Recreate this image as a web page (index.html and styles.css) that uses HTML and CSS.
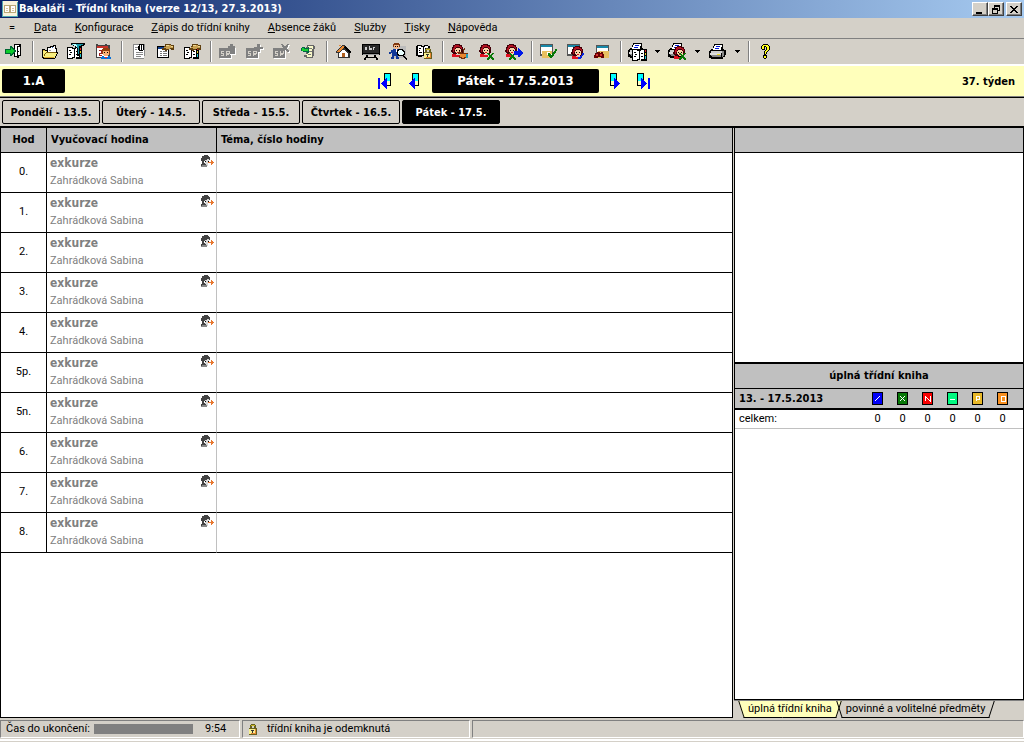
FILE: index.html
```html
<!DOCTYPE html>
<html lang="cs">
<head>
<meta charset="utf-8">
<title>Bakaláři - Třídní kniha</title>
<link rel="stylesheet" href="styles.css">
</head>
<body>
<svg class="defs" aria-hidden="true">
  <symbol id="girl" viewBox="0 0 14 14">
    <path fill="#400008" d="M4 0h5v1h2v2h1v6h-1v1H2V9H1V8H0V6h1V3h1V1h2z"/>
    <path fill="#b01020" d="M4 1h4v1h2v1h1v2h-1V4H9V3H5v1H4v2H3v2H2V4h1V2h1z"/>
    <path fill="#f8d0a8" d="M5 4h4v1h1v4H9v1H6V9H5V8H4V5h1z"/>
    <path fill="#000" d="M5 6h1v1H5zM8 6h1v1H8z"/>
    <path fill="#e01020" d="M6 8h2v1H6zM1 10h4v1h4v2H1z"/>
  </symbol>
  <symbol id="absent" viewBox="0 0 14 13">
    <path fill="#444" d="M4 0h4v1h1v1h1v3H9V4H7v1H5v1H4v2h1v1h1v2H1V9h1V6H1V3h1V1h2z"/>
    <path fill="#d8d8d8" d="M5 5h2V4h2v4H8v1H5zM6 9h2v2H6z"/>
    <path fill="#888" d="M2 10h5v2H1v-1h1z"/>
    <path fill="#000" d="M5 6h1v1H5zM8 6h1v1H8z"/>
    <path fill="#e87830" d="M8 7h3V5h1v1h1v1h1v1h-1v1h-1v1h-1V8H8z"/>
  </symbol>
  <symbol id="book" viewBox="0 0 15 13">
    <path fill="#000" d="M0 1h6v1h2V1h7v12H9v-1H6v1H0z"/>
    <path fill="#fff" d="M1 2h4v1h2v8H5v1H1zM8 3h1V2h3v9H9v1H8z"/>
    <path fill="#000" d="M2 4h2v1H2zM3 6h2v1H3zM2 8h2v1H2zM9 5h2v1H9zM9 8h2v1H9z"/>
    <path fill="#e02020" d="M13 2h1v2h-1z"/><path fill="#e8d020" d="M13 5h1v2h-1z"/><path fill="#20c8d0" d="M13 8h1v3h-1z"/>
  </symbol>
  <symbol id="hand" viewBox="0 0 12 7">
    <path fill="#604010" d="M3 0h6v1h3v5H9V5H7v1H5v1H3V6H0V4h2V2h1z"/>
    <path fill="#c8a050" d="M4 1h5v1h2v2H8v1H4V4H2V3h2z"/>
    <path fill="#f0d890" d="M4 1h3v1H4zM9 2h2v1H9z"/>
  </symbol>
  <symbol id="card" viewBox="0 0 14 13">
    <path fill="#555" d="M0 0h13v11h-1v1H0z"/><path fill="#fff" d="M1 1h11v9H1z"/>
    <path fill="#1888a8" d="M1 1h11v2H1z"/>
  </symbol>
  <symbol id="sheet" viewBox="0 0 13 12">
    <path fill="#000" d="M0 0h12v12H0z"/><path fill="#fff" d="M1 3h10v8H1z"/><path fill="#104090" d="M1 1h10v2H1z"/>
    <path fill="#777" d="M3 5h2v1H3zM6 5h4v1H6zM3 7h2v1H3zM6 7h4v1H6zM3 9h2v1H3zM6 9h4v1H6z"/>
  </symbol>
  <symbol id="gray" viewBox="0 0 18 16">
    <path fill="#fff" d="M1 6h12v10H1z"/><path fill="#808080" d="M0 5h12v10H0z"/>
    <path fill="#d4d0c8" d="M2 8h3v1H3v1h2v3H2v-1h2v-1H2zM7 8h4v3h-1v1H8v1H7z"/>
    <path fill="#808080" d="M8 9h2v1H8z"/>
  </symbol>
  <symbol id="printer" viewBox="0 0 17 15">
    <path fill="#000" d="M5 0h9v5h1v1h2v5h-1v2h-2v2H2v-1H0V7h1V6h1V5h2V2h1z"/>
    <path fill="#fff" d="M6 1h7v2h-1v3H4V4h1V2h1z"/><path fill="#0018d8" d="M7 2h4v1H7zM6 4h4v1H6z"/>
    <path fill="#ccc" d="M2 7h11v2H2z"/><path fill="#888" d="M13 7h2v5h-1v1h-1zM2 11h10v2H3z"/>
    <path fill="#ddd" d="M1 9h11v2H1z"/><path fill="#f0e020" d="M8 10h3v1H8z"/>
  </symbol>
  <symbol id="lock" viewBox="0 0 10 11">
    <path fill="#666020" d="M3 0h4v1h1v3h1v7H1V4h1V1h1z"/><path fill="#d4d0c8" d="M4 2h2v2H4z"/>
    <path fill="#c8b828" d="M3 1h4v1H3z"/><path fill="#f8f090" d="M1 5h7v5H1z"/><path fill="#e88830" d="M7 5h1v5H7zM3 9h5v1H3z"/>
    <path fill="#333" d="M3 6h3v1H5v2H4V7H3z"/>
  </symbol>
  <symbol id="cross" viewBox="0 0 7 7"><path fill="#087808" d="M0 0h2v1h1v1h1V1h1V0h2v1H6v1H5v2h1v1h1v2H5V6H4V5H3v1H2v1H0V5h1V4h1V2H1V1H0z"/></symbol>
  <symbol id="drop" viewBox="0 0 5 3"><path d="M0 0h5v1H4v1H3v1H2V2H1V1H0z"/></symbol>
</svg>

<header class="titlebar">
  <svg class="appicon" viewBox="0 0 16 16"><path fill="#f8f4dc" d="M0 0h16v16H0z"/><path fill="#50a8b0" d="M0 0h1v16H0zM15 1h1v15h-1zM0 15h16v1H0z"/><path fill="#b8a878" d="M2 4h12v8H2z"/><path fill="#fff" d="M3 5h4v6H3zM9 5h4v6H9z"/><path fill="#d8c8a0" d="M4 7h2v1H4zM4 9h2v1H4zM10 7h2v1h-2zM10 9h2v1h-2z"/></svg>
  <h1>Bakaláři - Třídní kniha (verze 12/13, 27.3.2013)</h1>
  <div class="winbuttons">
    <button aria-label="Minimalizovat"><svg viewBox="0 0 10 9"><path d="M1 7h6v2H1z"/></svg></button>
    <button aria-label="Obnovit"><svg viewBox="0 0 10 9"><path d="M3 0h6v6H7V5h1V2H4v1H3zM1 3h6v6H1zM2 5v3h4V5z" fill-rule="evenodd"/></svg></button>
    <button class="close" aria-label="Zavřít"><svg viewBox="0 0 10 9"><path d="M1 1h2v1h1v1h2V2h1V1h2v1H8v1H7v1H6v1h1v1h1v1h1v1H7V7H6V6H4v1H3v1H1V7h1V6h1V5h1V4H3V3H2V2H1z"/></svg></button>
  </div>
</header>

<nav class="menu">
  <button>=</button>
  <button><u>D</u>ata</button>
  <button><u>K</u>onfigurace</button>
  <button><u>Z</u>ápis do třídní knihy</button>
  <button><u>A</u>bsence žáků</button>
  <button><u>S</u>lužby</button>
  <button><u>T</u>isky</button>
  <button><u>N</u>ápověda</button>
</nav>

<div class="toolbar" role="toolbar">
  <div class="group first">
    <button aria-label="Konec"><svg viewBox="0 0 20 18"><path d="M9 1h7v12h-2v2h-2v-1H9z"/><path fill="#fff" d="M10 2h4v1h-1v10h-3zM13 4h2v8h-2z"/><path d="M13 8h1v1h-1zM12 3h1v11h-1z"/><path fill="#063" d="M5 3h2v1h1v1h1v1h1v1h1v2h-1v1H9v1H8v1H7v1H5v-2H0V6h5z"/><path fill="#0dcc2a" d="M6 5h1v1h1v1h1v2H8v1H7v1H6v-1H1V7h5z"/></svg></button>
  </div>
  <div class="group">
    <button aria-label="Otevřít"><svg viewBox="0 0 20 18"><path d="M7 4h3V3h3V2h3v3h1v4h1v2h-1v2h-1v2h-1v1H3v-1H2V6h3v1h2z"/><path fill="#fff" d="M8 5h3V4h3V3h1v3h1v3H8z"/><path fill="#2860b8" d="M12 4h1v1h-1z"/><path fill="#999" d="M9 7h2v1H9z"/><path fill="#f8f080" d="M3 7h2v1h2v1h1v1h9v1h-1v2h-1v2H4v-1H3z"/><path fill="#d8a830" d="M3 7h2v1H3zM4 14h10v1H4z"/><path fill="#806010" d="M6 9h10v1H6zM5 10h1v1H5zM4 11h1v2H4z"/></svg></button>
    <button aria-label="Filtr"><svg viewBox="0 0 20 18"><use href="#book" x="0" y="3" width="15" height="13"/><path d="M4 0h14v2h-1v1h-2v2h-2v8h-3V5H8V3H6V2H4z"/><path fill="#1898a8" d="M5 1h11v1h-2v1h-2v8h-1V5L9 4V3H7V2H5z"/><path fill="#bff" d="M6 1h3v1h1v2H9V3H7V2H6z"/></svg></button>
    <button aria-label="Kalendář"><svg viewBox="0 0 20 18"><path fill="#444" d="M2 1h2v1h7V1h2v1h3v13H2z"/><path fill="#c83028" d="M3 3h11v2H3z"/><path fill="#fff" d="M3 5h11v9H3z"/><path fill="#a02020" d="M5 7h3v4H6v1h2v1H5v-3h2V8H5z"/><path fill="#904010" d="M9 5h6v1h1v5H8V6h1z"/><path fill="#f8b078" d="M9 8h6v4h-1v1h-4v-1H9z"/><path d="M10 9h1v1h-1zM13 9h1v1h-1z"/><path fill="#0870d8" d="M8 13h2v1h4v-1h2v1h1v2H7v-2h1z"/><path fill="#f02020" d="M11 14h2v1h-2z"/></svg></button>
  </div>
  <div class="group">
    <button aria-label="Poznámky"><svg viewBox="0 0 20 18"><path fill="#888" d="M4 1h12v12h-1v3H4z"/><path fill="#fff" d="M5 2h10v13H5z"/><path fill="#888" d="M6 4h3v1H6zM6 6h2v1H6zM7 9h7v1H7zM7 11h7v1H7zM7 13h5v1H7z"/><path d="M10 1h5v6h-1v1h-4V7H9V3h1zM11 2v5h1V2zm2 0v5h1V2z" fill-rule="evenodd"/></svg></button>
    <button aria-label="Zápis hodiny"><svg viewBox="0 0 20 18"><use href="#sheet" x="1" y="3" width="13" height="12"/><use href="#hand" x="6" y="1" width="12" height="7"/></svg></button>
    <button aria-label="Zápis do knihy"><svg viewBox="0 0 20 18"><use href="#book" x="1" y="3" width="15" height="13"/><use href="#hand" x="6" y="1" width="12" height="7"/></svg></button>
  </div>
  <div class="group">
    <button disabled aria-label="Upravit"><svg viewBox="0 0 20 18"><use href="#gray" x="1" y="0" width="18" height="16"/><path fill="#fff" d="M17 5h1v7h-6v-1h5z"/><path fill="#808080" d="M8 5h2V3h2V1h3v2h2v8h-5V8H8z"/></svg></button>
    <button disabled aria-label="Přidat"><svg viewBox="0 0 20 18"><use href="#gray" x="1" y="0" width="18" height="16"/><path fill="#fff" d="M13 2h3v3h3v2h-3v3h-3z"/><path fill="#808080" d="M12 1h3v3h3v2h-3v3h-3V6H9V4h3z"/></svg></button>
    <button disabled aria-label="Smazat"><svg viewBox="0 0 20 18"><use href="#gray" x="1" y="0" width="18" height="16"/><path fill="#fff" d="M16 2h2v1h-1v2h-1v2h1v1h1v2h-2V8h-1z"/><path fill="#808080" d="M9 1h2v1h1v1h2V2h1V1h2v1h-1v2h-1v2h1v1h1v2h-2V8h-1V7h-2v1h-1v1H9V7h1V6h1V4h-1V2H9z"/></svg></button>
    <button aria-label="Přenést"><svg viewBox="0 0 20 18"><path fill="#666" d="M8 2h7v1h1v3h-1v7h-1v2H7v-1H5v-2h2V4h1z"/><path fill="#f8f8c8" d="M9 3h5v3h-1v8H8v-2H7v-1h2z"/><path fill="#777" d="M10 5h3v1h-3zM10 8h3v1h-3zM9 11h3v1H9z"/><path fill="#064" d="M3 4h3v1h3V4h1v6H8V9H4V8H2V5h1z"/><path fill="#19cc30" d="M3 5h2v1h4v2H3z"/></svg></button>
  </div>
  <div class="group">
    <button aria-label="Domů"><svg viewBox="0 0 20 18"><path fill="#333" d="M8 2h3v1h1v1h1v1h1v1h1v1h1v1h1v2h-1v5H4v-5H2V8h1V7h1V6h1V5h1V4h1V3h1z"/><path fill="#fff" d="M5 10h1V9h1V8h1V7h3v1h1v1h1v1h1v4H5z"/><path fill="#e88830" d="M8 3h2v2H9v1H8v1H7v1H6v1H3V8h1V7h1V6h1V5h1V4h1zM5 2h2v1H5z"/><path fill="#000" d="M11 3h1v1h1v1h1v1h1v1h1v1h1v2h-2V9h-1V8h-1V7h-1V6h-1V5h-1V4h1z"/><path fill="#b06020" d="M8 10h3v4H8z"/></svg></button>
    <button aria-label="Tabule"><svg viewBox="0 0 20 18"><path d="M1 1h18v11H1z"/><path fill="#282828" d="M2 2h16v8H2z"/><path fill="#ccc" d="M4 4h2v3H4zM8 3h1v2h2v2H8zM12 4h2v1h-1v2h-1z"/><path fill="#999" d="M2 11h16v1H2z"/><path d="M5 12h2v2h6v-2h2v2h1v1h1v2h-2v-2H5v2H3v-2h1v-1h1z"/></svg></button>
    <button aria-label="Hledat žáka"><svg viewBox="0 0 20 18"><path fill="#bbb" d="M5 3h13v12H5z"/><path fill="#803810" d="M6 0h5v1h1v3H5V1h1z"/><path fill="#f8b888" d="M6 2h5v3h-1v1H7V5H6z"/><path d="M7 3h1v1H7zM9 3h1v1H9z"/><path fill="#103898" d="M5 6h7v4H9v2h1v2h1v2H8v-3H6v3H3v-2h1v-4H3v1H1V9h2V7h2z"/><path fill="#fff" d="M8 6h1v3H8z"/><path d="M10 6h5v1h1v1h1v4h-1v1h1v1h1v1h1v2h-1v-1h-1v-1h-1v-1h-1v-1h-5v-1H9V7h1z"/><path fill="#e8ffff" d="M11 7h3v1h1v1h1v2h-1v1h-4v-1h-1V8h1z"/></svg></button>
    <button aria-label="Uzamknout"><svg viewBox="0 0 20 18"><path d="M2 2h5v1h2V2h4v1h2v11h-5v-1H7v1H3v-1H1V3h1z"/><path fill="#fff" d="M3 3h3v1h2v8H3zM9 4h1V3h3v9H9z"/><path d="M4 5h2v1H4zM4 7h1v1H4zM4 9h3v1H4zM10 5h2v1h-2z"/><use href="#lock" x="8" y="5" width="10" height="11"/></svg></button>
  </div>
  <div class="group">
    <button aria-label="Absence žáka"><svg viewBox="0 0 20 18"><use href="#girl" x="1" y="1" width="14" height="14"/><path fill="#703010" d="M9 8h1v1h2v1h1V6h1V5h1v2h-1v3h4v5h-3v1h-4v-1H9v-2h1v-2H8V9h1z"/><path fill="#e88830" d="M10 11h7v3h-3v1h-2v-1h-2z"/><path fill="#20a0c0" d="M16 11h2v4h-2z"/></svg></button>
    <button aria-label="Smazat absenci"><svg viewBox="0 0 20 18"><use href="#girl" x="2" y="1" width="14" height="14"/><use href="#cross" x="10" y="10" width="7" height="7"/></svg></button>
    <button aria-label="Přesun absence"><svg viewBox="0 0 20 18"><use href="#girl" x="1" y="1" width="14" height="14"/><use href="#cross" x="5" y="10" width="7" height="7"/><path fill="#0018e8" d="M10 8h4V5h1v1h1v1h1v1h1v1h1v2h-1v1h-1v1h-1v1h-2v-2h-4z"/></svg></button>
  </div>
  <div class="group">
    <button aria-label="Potvrdit"><svg viewBox="0 0 20 18"><use href="#card" x="1" y="1" width="14" height="13"/><path fill="#e8c060" d="M3 8h10v7H3z"/><path fill="#fff" d="M8 9h3v2h2v3h-3v-2H8z"/><path fill="#087808" d="M16 6h2v2h-1v2h-1v1h-1v2h-1v1h-1v1h-2v-1h-1v-1H9v-3h2v1h1v1h1v-2h1V9h1V8h1z"/></svg></button>
    <button aria-label="Potvrdit žáka"><svg viewBox="0 0 20 18"><use href="#card" x="1" y="1" width="14" height="13"/><use href="#girl" x="5" y="3" width="14" height="14"/><path fill="#0828e0" d="M16 10h2v2h-1v1h-1v2h-1v1h-3v-2h2v-1h1v-1h1z"/></svg></button>
    <button aria-label="Prohlížení"><svg viewBox="0 0 20 18"><use href="#card" x="3" y="2" width="14" height="13"/><path fill="#e8c060" d="M5 8h11v7H5z"/><path fill="#600" d="M2 10h2V9h3v1h1V9h2v2h1v4H8v-1H5v1H1v-3h1z"/><path fill="#d83030" d="M3 11h2v2H3zM7 11h2v2H7z"/></svg></button>
  </div>
  <div class="group">
    <button aria-label="Tisk knihy"><svg viewBox="0 0 20 18"><use href="#printer" x="0" y="0" width="17" height="15"/><use href="#book" x="4" y="5" width="15" height="13"/></svg></button><button class="arrow" aria-label="Možnosti tisku knihy"><svg viewBox="0 0 5 3"><use href="#drop"/></svg></button>
    <button aria-label="Tisk absence"><svg viewBox="0 0 20 18"><use href="#printer" x="0" y="0" width="17" height="15"/><use href="#girl" x="5" y="3" width="14" height="14"/><use href="#cross" x="11" y="10" width="7" height="7"/></svg></button><button class="arrow" aria-label="Možnosti tisku absence"><svg viewBox="0 0 5 3"><use href="#drop"/></svg></button>
    <button aria-label="Tisk"><svg viewBox="0 0 20 18"><use href="#printer" x="1" y="1" width="17" height="15"/></svg></button><button class="arrow" aria-label="Možnosti tisku"><svg viewBox="0 0 5 3"><use href="#drop"/></svg></button>
  </div>
  <div class="group">
    <button aria-label="Nápověda"><svg viewBox="0 0 20 18"><path d="M7 1h5v1h1v1h1v4h-1v1h-1v1h-1v2h-1v1h1v3h-1v1H8v-1H7v-3h1V8h1V7h1V4H9v3H6V6H5V3h1V2h1z"/><path fill="#ffff18" d="M7 2h5v1h1v4h-1v1h-1v1h-1v2H9V8h1V7h1V4h-1V3H8v3H6V3h1zM8 13h2v2H8z"/></svg></button>
  </div>
</div>

<section class="classbar">
  <strong class="class">1.A</strong>
  <div class="datenav">
    <button aria-label="První"><svg viewBox="0 0 16 18"><path d="M7 1h7v13H7z"/><path fill="#0ff" d="M8 2h5v7H8z"/><path fill="#ffffbb" d="M8 9h5v4H8z"/><path fill="#00f" d="M1 6h2v11H1zM9 6h1v11H9V16H8V15H7V14H6V13H5V12H4V11H5V10H6V9H7V8H8V7H9z"/></svg></button>
    <button aria-label="Předchozí"><svg viewBox="0 0 16 18"><path d="M6 1h7v13H6z"/><path fill="#0ff" d="M7 2h5v7H7z"/><path fill="#ffffbb" d="M7 9h5v4H7z"/><path fill="#00f" d="M8 6h1v11H8V16H7V15H6V14H5V13H4V12H3V11H4V10H5V9H6V8H7V7H8z"/></svg></button>
    <strong class="date">Pátek - 17.5.2013</strong>
    <button aria-label="Další"><svg viewBox="0 0 16 18"><path d="M3 1h7v13H3z"/><path fill="#0ff" d="M4 2h5v7H4z"/><path fill="#ffffbb" d="M4 9h5v4H4z"/><path fill="#00f" d="M7 6h1v1h1v1h1v1h1v1h1v1h1v1h-1v1h-1v1h-1v1H9v1H8v1H7z"/></svg></button>
    <button aria-label="Poslední"><svg viewBox="0 0 16 18"><path d="M1 1h7v13H1z"/><path fill="#0ff" d="M2 2h5v7H2z"/><path fill="#ffffbb" d="M2 9h5v4H2z"/><path fill="#00f" d="M5 6h1v1h1v1h1v1h1v1h1v1h1v1h-1v1H9v1H8v1H7v1H6v1H5zM12 6h2v11h-2z"/></svg></button>
  </div>
  <strong class="week">37. týden</strong>
</section>

<nav class="days">
  <button>Pondělí - 13.5.</button>
  <button>Úterý - 14.5.</button>
  <button>Středa - 15.5.</button>
  <button>Čtvrtek - 16.5.</button>
  <button class="active">Pátek - 17.5.</button>
</nav>

<main class="content">
  <section class="lessons">
    <table>
      <thead><tr><th class="hour">Hod</th><th class="subject">Vyučovací hodina</th><th>Téma, číslo hodiny</th></tr></thead>
      <tbody>
        <tr><td class="hour">0.</td><td class="subject"><div class="lesson"><b>exkurze</b><svg class="mark"><use href="#absent"/></svg><span>Zahrádková Sabina</span></div></td><td></td></tr>
        <tr><td class="hour">1.</td><td class="subject"><div class="lesson"><b>exkurze</b><svg class="mark"><use href="#absent"/></svg><span>Zahrádková Sabina</span></div></td><td></td></tr>
        <tr><td class="hour">2.</td><td class="subject"><div class="lesson"><b>exkurze</b><svg class="mark"><use href="#absent"/></svg><span>Zahrádková Sabina</span></div></td><td></td></tr>
        <tr><td class="hour">3.</td><td class="subject"><div class="lesson"><b>exkurze</b><svg class="mark"><use href="#absent"/></svg><span>Zahrádková Sabina</span></div></td><td></td></tr>
        <tr><td class="hour">4.</td><td class="subject"><div class="lesson"><b>exkurze</b><svg class="mark"><use href="#absent"/></svg><span>Zahrádková Sabina</span></div></td><td></td></tr>
        <tr><td class="hour">5p.</td><td class="subject"><div class="lesson"><b>exkurze</b><svg class="mark"><use href="#absent"/></svg><span>Zahrádková Sabina</span></div></td><td></td></tr>
        <tr><td class="hour">5n.</td><td class="subject"><div class="lesson"><b>exkurze</b><svg class="mark"><use href="#absent"/></svg><span>Zahrádková Sabina</span></div></td><td></td></tr>
        <tr><td class="hour">6.</td><td class="subject"><div class="lesson"><b>exkurze</b><svg class="mark"><use href="#absent"/></svg><span>Zahrádková Sabina</span></div></td><td></td></tr>
        <tr><td class="hour">7.</td><td class="subject"><div class="lesson"><b>exkurze</b><svg class="mark"><use href="#absent"/></svg><span>Zahrádková Sabina</span></div></td><td></td></tr>
        <tr><td class="hour">8.</td><td class="subject"><div class="lesson"><b>exkurze</b><svg class="mark"><use href="#absent"/></svg><span>Zahrádková Sabina</span></div></td><td></td></tr>
      </tbody>
    </table>
  </section>

  <aside class="side">
    <div class="notes"><div class="noteshead"></div></div>
    <div class="summary">
      <h2>úplná třídní kniha</h2>
      <table>
        <thead><tr>
          <th class="range">13. - 17.5.2013</th>
          <th><svg class="code blue" viewBox="0 0 9 11"><path d="M2 8l5-5"/></svg></th>
          <th><svg class="code green" viewBox="0 0 9 11"><path d="M2 3l5 5M7 3l-5 5"/></svg></th>
          <th><svg class="code red" viewBox="0 0 9 11"><path d="M2 8V3l5 5V3"/></svg></th>
          <th><svg class="code mint" viewBox="0 0 9 11"><path d="M2 6h5"/></svg></th>
          <th><svg class="code gold" viewBox="0 0 9 11"><path d="M3 8V3h3v3H3"/></svg></th>
          <th><svg class="code orange" viewBox="0 0 9 11"><path d="M3 3h4v5H3z"/></svg></th>
        </tr></thead>
        <tbody><tr><td class="range">celkem:</td><td>0</td><td>0</td><td>0</td><td>0</td><td>0</td><td>0</td></tr></tbody>
      </table>
    </div>
    <div class="tabs" role="tablist">
      <button class="tab selected" role="tab"><span>úplná třídní kniha</span></button>
      <button class="tab" role="tab"><span>povinné a volitelné předměty</span></button>
    </div>
  </aside>
</main>

<footer class="status">
  <div class="panel timer"><label for="left">Čas do ukončení:</label><progress id="left" max="100" value="100"></progress><span>9:54</span></div>
  <div class="panel state"><svg class="lockicon"><use href="#lock"/></svg><span>třídní kniha je odemknutá</span></div>
  <div class="panel rest"></div>
</footer>
</body>
</html>
```
FILE: styles.css
```css
* { box-sizing: border-box; }
body {
  margin: 0;
  min-height: 100vh;
  display: flex;
  flex-direction: column;
  background: #d4d0c8;
  color: #000;
  font: 11px/14px Roboto, "DejaVu Sans Condensed", sans-serif;
}
h1, h2, th, strong, b, .days button { font-family: "DejaVu Sans Condensed", "DejaVu Sans", sans-serif; }
svg { display: block; shape-rendering: crispEdges; }
button { margin: 0; padding: 0; border: 0; background: none; color: inherit; font: inherit; }
.defs { position: absolute; width: 0; height: 0; }

.titlebar {
  display: flex;
  align-items: center;
  height: 18px;
  padding: 0 2px;
  background: linear-gradient(90deg, #0a246a, #a6caf0);
  color: #fff;
}
.appicon { width: 16px; height: 16px; margin-right: 1px; }
h1 { margin: 0; flex: 1; font-size: 11px; line-height: 18px; }
.winbuttons { display: flex; }
.winbuttons button {
  width: 16px;
  height: 14px;
  padding: 1px 2px;
  background: #d4d0c8;
  border: 1px solid;
  border-color: #fff #404040 #404040 #fff;
  box-shadow: inset -1px -1px #808080;
}
.winbuttons svg { width: 10px; height: 9px; }
.winbuttons .close { margin-left: 2px; }

.menu { display: flex; gap: 18px; height: 20px; padding-left: 8px; }
.menu button:first-child { width: 8px; }

.toolbar {
  display: flex;
  align-items: center;
  height: 28px;
  border-top: 1px solid #808080;
  border-bottom: 2px solid #fff;
}
.group { display: flex; height: 21px; padding: 0 4px 0 3px; border-left: 1px solid #808080; box-shadow: inset 1px 0 #fff; }
.group.first { padding: 0 4px 0 1px; border: 0; box-shadow: none; }
.group button { display: flex; align-items: center; justify-content: center; width: 27px; }
.group svg { width: 20px; height: 18px; }
.group .arrow { width: 13px; }
.group .arrow svg { width: 5px; height: 3px; }

.classbar {
  display: grid;
  grid-template-columns: 1fr auto 1fr;
  align-items: center;
  height: 32px;
  padding: 0 9px 2px 2px;
  background: #ffffbb;
  border-bottom: 1px solid #000;
  box-shadow: inset 0 -1px #808080;
}
.class, .date {
  background: #000;
  color: #fff;
  border-radius: 2px;
  font-size: 13px;
  line-height: 24px;
  text-align: center;
}
.class { width: 63px; }
.date { width: 167px; margin-left: 2px; }
.datenav { display: flex; align-items: center; gap: 3px; padding-left: 12px; }
.datenav button { width: 26px; }
.datenav svg { width: 16px; height: 18px; margin: auto; }
.week { padding-top: 2px; text-align: right; }

.days { display: flex; gap: 2px; height: 30px; padding: 2px; border-bottom: 2px solid #000; }
.days button { width: 98px; padding-top: 2px; border: 1px solid #000; border-radius: 2px; font-weight: bold; }
.days .active { background: #000; color: #fff; }

.content { flex: 1; display: flex; gap: 1px; }
.lessons { flex: 1; background: #fff; border: 1px solid #000; border-top: 0; }
table { width: 100%; border-collapse: separate; border-spacing: 0; table-layout: fixed; }
th, td { padding: 0; font-weight: normal; }
.lessons th { height: 25px; padding-left: 4px; background: #c0c0c0; border-bottom: 1px solid #000; text-align: left; font-weight: bold; }
.lessons th.hour { padding-left: 0; text-align: center; }
.lessons td { height: 40px; border-bottom: 1px solid #000; }
.lessons .hour { width: 46px; border-right: 1px solid #000; text-align: center; }
.lessons .subject { width: 170px; }
.lessons th.subject { border-right: 1px solid #000; }
.lessons td.subject { border-right: 1px solid #c0c0c0; }
.lessons td:first-child { padding-bottom: 2px; }
.lesson { display: grid; grid-template-columns: 1fr 14px; padding: 1px 2px 2px 3px; color: #808080; }
.lesson b { font-size: 12px; line-height: 18px; }
.lesson span { line-height: 18px; }
.mark { width: 14px; height: 13px; margin-top: 1px; }

.side { width: 290px; display: flex; flex-direction: column; }
.notes { height: 234px; background: #fff; border: 1px solid #000; border-width: 0 1px; }
.noteshead { height: 25px; background: #c0c0c0; border-bottom: 1px solid #000; }
.summary { flex: 1; background: #fff; border: 1px solid #000; border-top-width: 2px; }
h2 { margin: 0; background: #c0c0c0; border-bottom: 1px solid #000; font-size: 11px; line-height: 24px; text-align: center; }
.summary th { height: 21px; background: #c0c0c0; border-bottom: 2px solid #000; }
.summary td { height: 19px; border-bottom: 1px solid #c0c0c0; text-align: center; }
.summary th, .summary td { width: 25px; }
.summary .range { width: auto; padding-left: 4px; text-align: left; }
.summary th.range { font-weight: bold; }
.summary tr > :last-child { width: 33px; padding-right: 8px; }
.code { width: 11px; height: 13px; margin: auto; border: 1px solid #000; fill: none; stroke: #fff; }
.blue { background: #0000f8; }
.green { background: #087808; }
.red { background: #f80000; }
.mint { background: #00f880; }
.gold { background: #e8b828; }
.orange { background: #f89020; }

.tabs { display: flex; height: 18px; padding-left: 7px; border-top: 1px solid #808080; }
.tab { position: relative; height: 16px; padding: 0 7px; }
.tab::before, .tab::after { content: ""; position: absolute; top: 0; height: 16px; border-bottom: 1px solid #000; }
.tab::before { left: 0; right: 50%; border-left: 1px solid #000; transform: skewX(18deg); }
.tab::after { left: 45%; right: 0; border-right: 1px solid #000; transform: skewX(-18deg); }
.selected::before, .selected::after { background: #ffffbb; }
.tab span { position: relative; z-index: 1; }

.status { display: flex; gap: 2px; height: 24px; padding-top: 2px; box-shadow: inset 0 -1px #d4d0c8, inset 0 -3px #fff; }
.panel { display: flex; align-items: center; height: 18px; padding-left: 5px; border: 1px solid; border-color: #808080 #fff #fff #808080; }
.timer { width: 240px; }
.timer label { width: 81px; white-space: nowrap; }
.timer progress { appearance: none; width: 99px; height: 10px; margin: 0 12px 0 7px; border: 0; }
.timer progress::-webkit-progress-bar { background: #d4d0c8; }
.timer progress::-webkit-progress-value { background: #808080; }
.state { width: 228px; gap: 9px; }
.lockicon { width: 10px; height: 11px; }
.rest { flex: 1; }
```
